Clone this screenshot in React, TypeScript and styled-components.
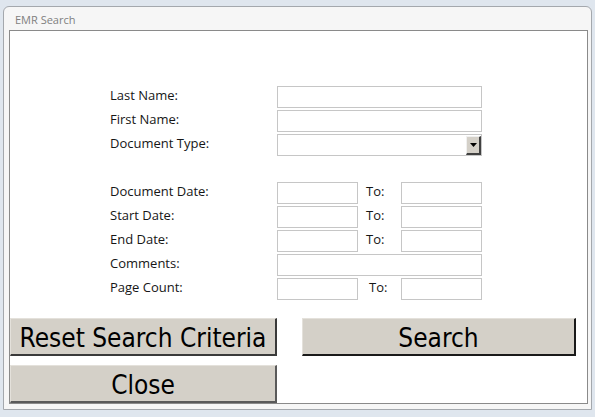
import React from "react";
import styled, { createGlobalStyle } from "styled-components";

const Global = createGlobalStyle`
  html, body { margin: 0; padding: 0; background: #dfe6ee; }
  body { font-family: "Open Sans", "Noto Sans", sans-serif; }
  * { box-sizing: border-box; }
`;

const Page = styled.div`
  width: 595px;
  height: 417px;
  padding: 6px 4px 7px 3px;
  background: #dfe6ee;
`;

const Window = styled.div`
  width: 589px;
  height: 404px;
  border: 1px solid #a4a8ad;
  border-radius: 6px 6px 0 0;
  background: #f6f6f6;
  display: flex;
  flex-direction: column;
  padding: 0 3px 5px 5px;
`;

const TitleBar = styled.div`
  height: 23px;
  display: flex;
  align-items: center;
  padding: 1px 0 0 6px;
  font-family: "Open Sans", sans-serif;
  font-size: 11px;
  color: #808080;
`;

const Panel = styled.div`
  flex: 1;
  background: #ffffff;
  border: 1px solid #8a8a8a;
  display: flex;
  flex-direction: column;
`;

const FormGrid = styled.div`
  margin: 55px 0 0 100px;
  display: grid;
  grid-template-columns: 167px 81px 43px 81px;
  grid-auto-rows: 22px;
  row-gap: 2px;
`;

const Label = styled.div`
  grid-column: 1;
  display: flex;
  align-items: center;
  font-family: "Open Sans", sans-serif;
  font-size: 13px;
  color: #161616;
  padding-bottom: 4px;
`;

const Field = styled.div<{ $wide?: boolean }>`
  grid-column: ${(p) => (p.$wide ? "2 / 5" : "auto")};
  height: 22px;
  border: 1px solid #c6c6c6;
  background: #fff;
  position: relative;
`;

const ToLabel = styled.div<{ $indent: number }>`
  display: flex;
  align-items: center;
  padding-left: ${(p) => p.$indent}px;
  padding-bottom: 4px;
  font-family: "Open Sans", sans-serif;
  font-size: 13px;
  color: #161616;
`;

const Spacer = styled.div`
  grid-column: 1 / 5;
  height: 24px;
`;

const DropButton = styled.div`
  position: absolute;
  right: 0;
  top: 1px;
  width: 15px;
  height: 19px;
  background: #d4d0c8;
  border-right: 2px solid #404040;
  border-bottom: 2px solid #404040;
  border-top: 1px solid #f0f0f0;
  border-left: 1px solid #f0f0f0;
  display: flex;
  align-items: center;
  justify-content: center;
`;

const ButtonGrid = styled.div`
  margin-top: auto;
  display: grid;
  grid-template-columns: 267px 274px;
  column-gap: 25px;
  grid-auto-rows: 38px;
  row-gap: 9px;
`;

const BigButton = styled.button<{ $edge: string }>`
  margin: 0;
  padding: 2px 0 0;
  background: #d4d0c8;
  border: none;
  border-top: 1px solid #e4e1db;
  border-left: 1px solid #e4e1db;
  border-right: 2px solid ${(p) => p.$edge};
  border-bottom: 2px solid ${(p) => p.$edge};
  font-family: "DejaVu Sans Condensed", "DejaVu Sans", sans-serif;
  font-size: 26px;
  color: #000;
  display: flex;
  align-items: center;
  justify-content: center;
`;

const rows = [
  { label: "Document Date:", indent: 8 },
  { label: "Start Date:", indent: 8 },
  { label: "End Date:", indent: 8 },
];

export default function App() {
  return (
    <Page>
      <Global />
      <Window>
        <TitleBar>EMR Search</TitleBar>
        <Panel>
          <FormGrid>
            <Label>Last Name:</Label>
            <Field $wide />
            <Label>First Name:</Label>
            <Field $wide />
            <Label>Document Type:</Label>
            <Field $wide>
              <DropButton>
                <svg width="7" height="4" viewBox="0 0 7 4">
                  <path d="M0 0 H7 L3.5 4 Z" fill="#000" />
                </svg>
              </DropButton>
            </Field>
            <Spacer />
            {rows.map((r) => (
              <React.Fragment key={r.label}>
                <Label>{r.label}</Label>
                <Field />
                <ToLabel $indent={r.indent}>To:</ToLabel>
                <Field />
              </React.Fragment>
            ))}
            <Label>Comments:</Label>
            <Field $wide />
            <Label>Page Count:</Label>
            <Field />
            <ToLabel $indent={11}>To:</ToLabel>
            <Field />
          </FormGrid>
          <ButtonGrid>
            <BigButton $edge="#3a3a3a">Reset Search Criteria</BigButton>
            <BigButton $edge="#1a1a1a">Search</BigButton>
            <BigButton $edge="#5a5a5a">Close</BigButton>
          </ButtonGrid>
        </Panel>
      </Window>
    </Page>
  );
}
